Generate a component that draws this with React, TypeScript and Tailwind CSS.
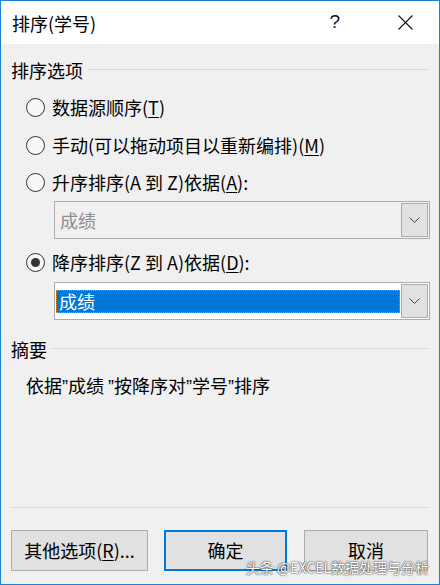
import React from "react"

const font = "font-['Noto_Sans_CJK_SC','Noto_Sans_CJK_JP',sans-serif]"

function Radio({ checked, children }: { checked?: boolean; children: React.ReactNode }) {
    return (
        <div className="flex items-center h-[24px] ml-[15px]">
            <div className="w-[19px] h-[19px] rounded-full border border-[#333333] bg-[#f7f7f7] flex items-center justify-center shrink-0">
                {checked && <div className="w-[9px] h-[9px] rounded-full bg-[#333333]" />}
            </div>
            <span className="ml-[7px] text-[18px] leading-[24px] text-black whitespace-nowrap">{children}</span>
        </div>
    )
}

function Chevron() {
    return (
        <svg width="11" height="6" viewBox="0 0 11 6" fill="none">
            <polyline points="0.5,0.5 5.5,5.5 10.5,0.5" stroke="#444444" strokeWidth="1" />
        </svg>
    )
}

function Select({ selected }: { selected?: boolean }) {
    return (
        <div className={`ml-[43px] mr-[-1px] h-[38px] border border-[#adadad] flex items-stretch ${selected ? 'bg-white' : 'bg-[#f0f0f0]'}`}>
            <div className="flex-1 flex items-center px-[1px]">
                {selected ? (
                    <div className="w-full h-[23px] bg-[#0078d7] border border-dotted border-[#e98a2c] flex items-center pl-[2px] text-white text-[18px] leading-[22px]">成绩</div>
                ) : (
                    <span className="pl-[4px] text-[18px] leading-[22px] text-[#8d8d8d]">成绩</span>
                )}
            </div>
            <div className="w-[27px] my-[1px] mr-[1px] bg-[#e1e1e1] border border-[#adadad] flex items-center justify-center">
                <Chevron />
            </div>
        </div>
    )
}

function Header({ children }: { children: React.ReactNode }) {
    return (
        <div className="flex items-center h-[26px]">
            <span className="text-[18px] leading-[26px] text-black whitespace-nowrap">{children}</span>
            <div className="flex-1 h-px bg-[#d8d8d8] ml-[5px] mt-[-2px]" />
        </div>
    )
}

function Button({ children, primary, className }: { children: React.ReactNode; primary?: boolean; className: string }) {
    return (
        <div className={`h-[41px] flex items-center justify-center bg-[#e1e1e1] text-[18px] text-black ${primary ? 'border-2 border-[#0078d7]' : 'border border-[#adadad]'} ${className}`}>
            {children}
        </div>
    )
}

// narrow closing quote, as the Windows UI font draws it
function Q() {
    return <span className="font-['Liberation_Sans',sans-serif]">”</span>
}

export default function App() {
    return (
        <div className={`relative w-[440px] h-[585px] border border-[#1a81d6] bg-[#f0f0f0] flex flex-col ${font}`}>
            {/* title bar */}
            <div className="h-[43px] bg-white flex items-center pl-[11px] shrink-0">
                <span className="text-[18px] leading-[24px] text-black">排序(学号)</span>
                <span className="ml-auto mr-[58px] text-[19px] font-['Liberation_Sans',sans-serif] text-[#111]">?</span>
                <svg width="15" height="15" viewBox="0 0 15 15" className="mr-[26px]">
                    <path d="M0.5 0.5 L14.5 14.5 M14.5 0.5 L0.5 14.5" stroke="#111" strokeWidth="1.1" />
                </svg>
            </div>

            {/* body */}
            <div className="flex-1 flex flex-col px-[10px]">
                <div className="mt-[13px]"><Header>排序选项</Header></div>

                <div className="mt-[12px]"><Radio>数据源顺序(<u className="underline-offset-2">T</u>)</Radio></div>
                <div className="mt-[14px]"><Radio>手动(可以拖动项目以重新编排)(<u className="underline-offset-2">M</u>)</Radio></div>
                <div className="mt-[13px]"><Radio>升序排序(A 到 Z)依据(<u className="underline-offset-2">A</u>):</Radio></div>
                <div className="mt-[7px]"><Select /></div>
                <div className="mt-[11px]"><Radio checked>降序排序(Z 到 A)依据(<u className="underline-offset-2">D</u>):</Radio></div>
                <div className="mt-[8px]"><Select selected /></div>

                <div className="mt-[16px]"><Header>摘要</Header></div>
                <div className="mt-[11px] pl-[15px] text-[18px] leading-[24px] text-black whitespace-nowrap">
                    依据<Q />成绩 <Q />按降序对<Q />学号<Q />排序
                </div>

                <div className="mt-auto h-px bg-[#d8d8d8]" />
                <div className="mt-[22px] mb-[13px] flex">
                    <Button className="w-[137px]">其他选项(<u className="underline-offset-2">R</u>)...</Button>
                    <Button primary className="w-[123px] ml-[16px]">确定</Button>
                    <Button className="w-[124px] ml-[17px]">取消</Button>
                </div>
            </div>

            <div className="absolute right-[10px] bottom-[8px] text-[14px] leading-[18px] text-white [text-shadow:0_0_2px_#333,0_0_1px_#333]">头条 @EXCEL数据处理与分析</div>
        </div>
    )
}
